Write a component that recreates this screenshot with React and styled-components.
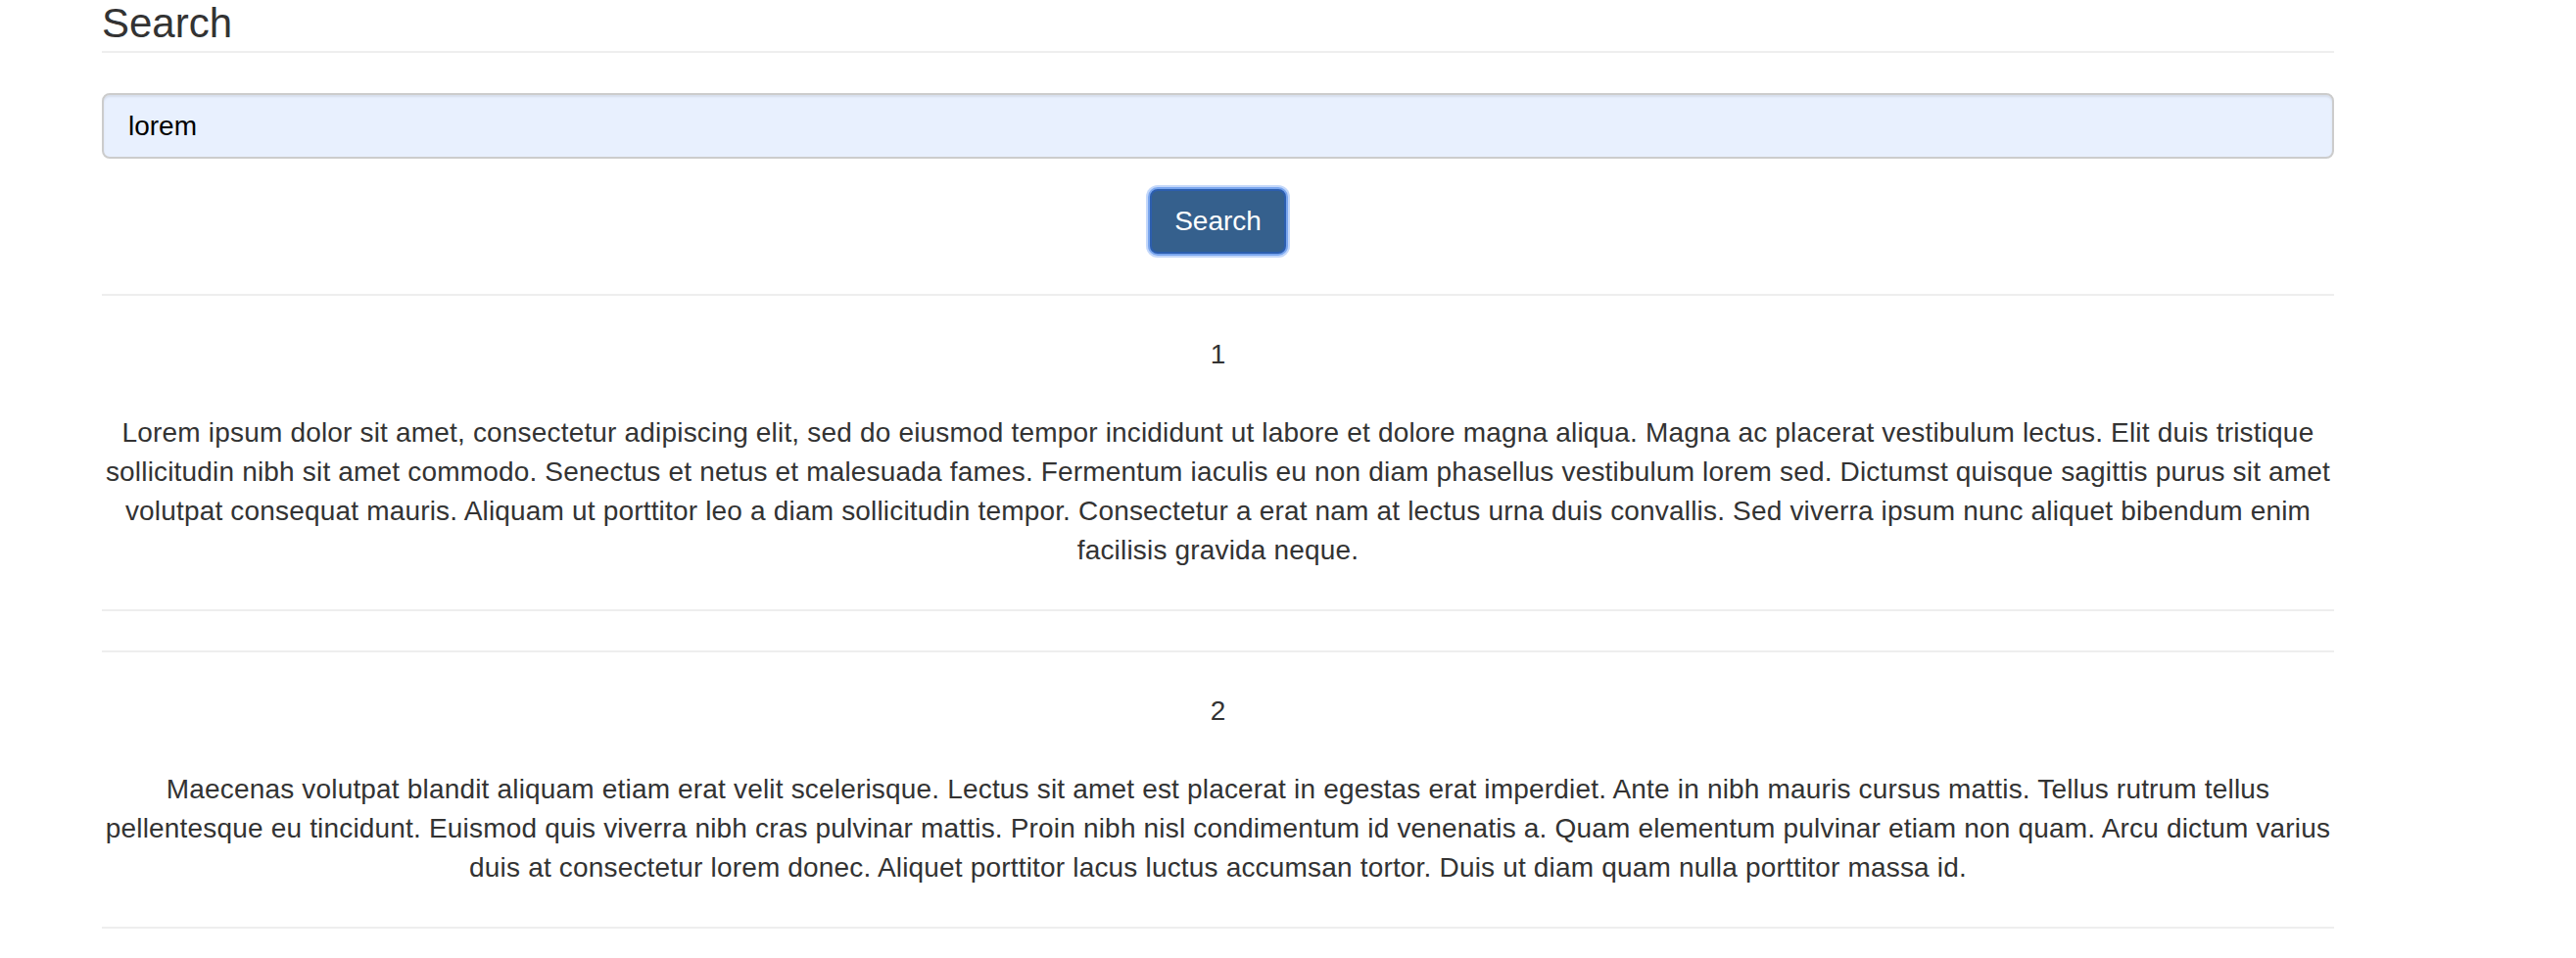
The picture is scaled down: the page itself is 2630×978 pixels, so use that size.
import React from 'react';
import styled, { createGlobalStyle } from 'styled-components';

const results = [
  {
    id: 1,
    text: 'Lorem ipsum dolor sit amet, consectetur adipiscing elit, sed do eiusmod tempor incididunt ut labore et dolore magna aliqua. Magna ac placerat vestibulum lectus. Elit duis tristique sollicitudin nibh sit amet commodo. Senectus et netus et malesuada fames. Fermentum iaculis eu non diam phasellus vestibulum lorem sed. Dictumst quisque sagittis purus sit amet volutpat consequat mauris. Aliquam ut porttitor leo a diam sollicitudin tempor. Consectetur a erat nam at lectus urna duis convallis. Sed viverra ipsum nunc aliquet bibendum enim facilisis gravida neque.',
  },
  {
    id: 2,
    text: 'Maecenas volutpat blandit aliquam etiam erat velit scelerisque. Lectus sit amet est placerat in egestas erat imperdiet. Ante in nibh mauris cursus mattis. Tellus rutrum tellus pellentesque eu tincidunt. Euismod quis viverra nibh cras pulvinar mattis. Proin nibh nisl condimentum id venenatis a. Quam elementum pulvinar etiam non quam. Arcu dictum varius duis at consectetur lorem donec. Aliquet porttitor lacus luctus accumsan tortor. Duis ut diam quam nulla porttitor massa id.',
  },
];

const App = () => {
  return (
    <>
      <GlobalStyle />
      <Container>
        <PageHeader>Search</PageHeader>
        <SearchForm onSubmit={(e) => e.preventDefault()}>
          <SearchInput type="text" defaultValue="lorem" />
          <SearchButton type="submit">Search</SearchButton>
        </SearchForm>
        <ResultList>
          {results.map((r) => (
            <ResultCard key={r.id}>
              <ResultNumber>{r.id}</ResultNumber>
              <ResultText>{r.text}</ResultText>
            </ResultCard>
          ))}
        </ResultList>
      </Container>
    </>
  );
};

export default App;

const GlobalStyle = createGlobalStyle`
  body {
    margin: 0;
    background: #fff;
    color: #333;
    font-family: "Liberation Sans", Helvetica, Arial, sans-serif;
    font-size: 28px;
    line-height: 40px;
  }
`;

const Container = styled.div`
  width: 2279px;
  margin-left: 104px;
`;

const PageHeader = styled.h3`
  margin: 0;
  padding-bottom: 4px;
  border-bottom: 2px solid #eee;
  font-size: 42px;
  font-weight: 500;
  line-height: 48px;
  color: #333;
`;

const SearchForm = styled.form`
  display: flex;
  flex-direction: column;
  align-items: center;
  gap: 31px;
  margin: 41px 0 0;
`;

const SearchInput = styled.input`
  box-sizing: border-box;
  width: 100%;
  height: 67px;
  padding: 0 25px;
  border: 2px solid #ccc;
  border-radius: 8px;
  background: #e8f0fe;
  box-shadow: inset 0 2px 2px rgba(0, 0, 0, 0.075);
  font-family: inherit;
  font-size: 28px;
  color: #000;
  outline: none;
`;

const SearchButton = styled.button`
  box-sizing: border-box;
  height: 66px;
  padding: 11px 23px;
  border: 2px solid #2c5eae;
  border-radius: 8px;
  background: #35608d;
  box-shadow: 0 0 0 2px #7aa6ee, 0 0 0 4px #c4d8fa;
  font-family: inherit;
  font-size: 28px;
  line-height: 40px;
  color: #fff;
  cursor: pointer;
`;

const ResultList = styled.div`
  display: flex;
  flex-direction: column;
  gap: 40px;
  margin-top: 41px;
`;

const ResultCard = styled.section`
  padding: 40px 0;
  border-top: 2px solid #eee;
  border-bottom: 2px solid #eee;
  text-align: center;
`;

const ResultNumber = styled.div`
  margin-bottom: 40px;
`;

const ResultText = styled.p`
  margin: 0;
  letter-spacing: 0.18px;
`;
